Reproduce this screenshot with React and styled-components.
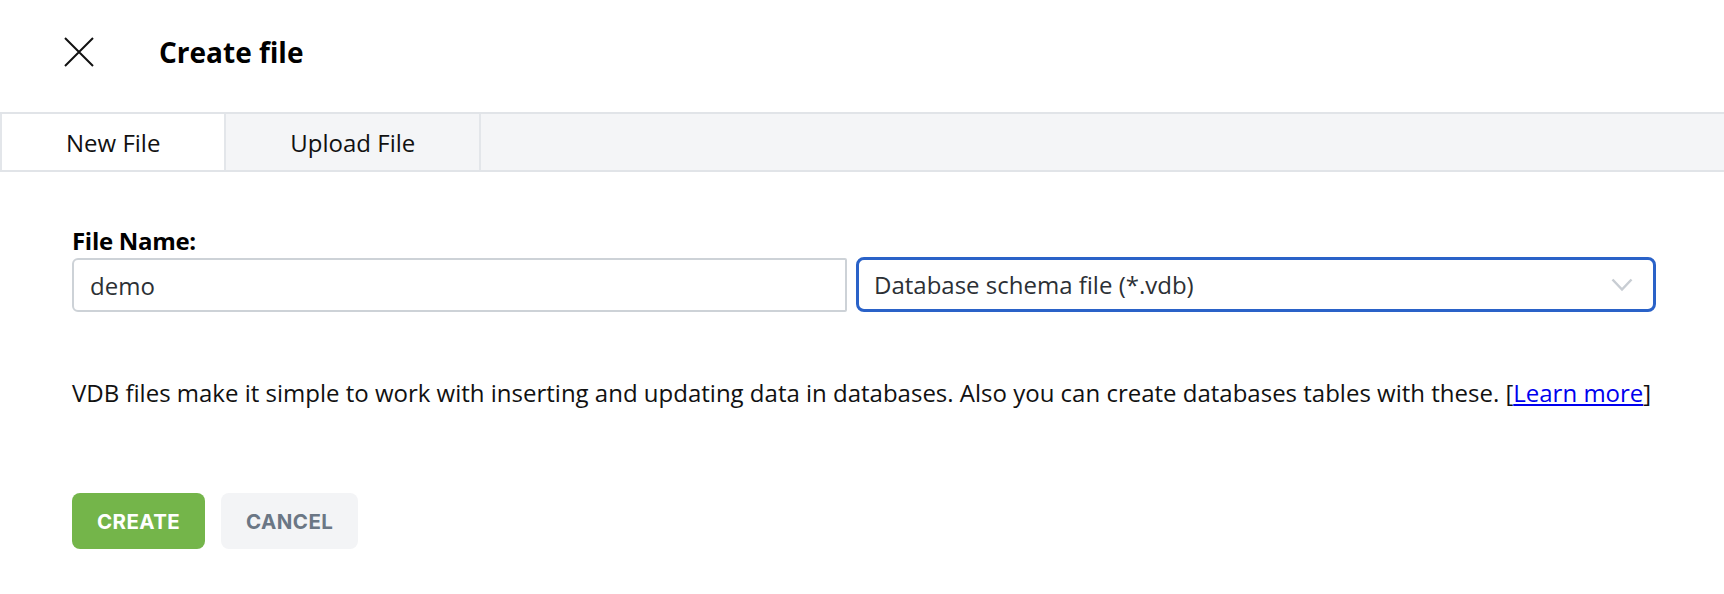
import React from 'react'
import styled, { createGlobalStyle } from 'styled-components'

const GlobalStyle = createGlobalStyle`
  * { box-sizing: border-box; }
  html, body {
    margin: 0;
    padding: 0;
    background: #ffffff;
    font-family: "Open Sans", "Noto Sans", sans-serif;
    color: #000000;
  }
`

const Page = styled.div`
  width: 1724px;
  min-height: 594px;
  background: #fff;
`

const Header = styled.header`
  display: flex;
  align-items: center;
  height: 104px;
  padding-left: 64px;
  margin-bottom: 8px;
`

const CloseButton = styled.button`
  display: flex;
  align-items: center;
  justify-content: center;
  width: 30px;
  height: 30px;
  padding: 0;
  border: none;
  background: none;
  cursor: pointer;
  margin-right: 65px;
`

const Title = styled.h1`
  margin: 0;
  font-size: 28px;
  font-weight: 700;
  color: #000;
`

const TabBar = styled.div`
  display: flex;
  height: 60px;
  background: #f4f5f7;
  border-top: 2px solid #e1e4e8;
  border-bottom: 2px solid #e1e4e8;
`

const Tab = styled.div`
  display: flex;
  align-items: center;
  padding: 0 64px;
  font-size: 24px;
  color: #111;
  background: ${props => (props.active ? '#ffffff' : 'transparent')};
  border-right: 2px solid #e3e6ea;
  &:first-child {
    border-left: 2px solid #e3e6ea;
  }
`

const Body = styled.main`
  padding: 0 72px;
`

const Label = styled.label`
  display: block;
  margin-top: 53px;
  margin-bottom: 1px;
  font-size: 24px;
  line-height: 32px;
  font-weight: 700;
  letter-spacing: -0.3px;
`

const FieldRow = styled.div`
  display: grid;
  grid-template-columns: 775px 800px;
  column-gap: 9px;
  align-items: center;
`

const TextInput = styled.input`
  height: 54px;
  padding: 0 16px;
  border: 2px solid #cdd2d7;
  border-radius: 6px 2px 2px 6px;
  font-family: inherit;
  font-size: 24px;
  color: #2c3035;
  outline: none;
`

const Select = styled.div`
  display: flex;
  align-items: center;
  justify-content: space-between;
  height: 55px;
  padding: 0 20px 0 15px;
  border: 3px solid #2a62c8;
  border-radius: 8px;
  font-size: 24px;
  color: #2c3035;
  margin-top: -1px;
`

const Description = styled.p`
  margin: 65px 0 0;
  font-size: 24px;
  line-height: 32px;
  color: #111;

  a {
    color: #0000ee;
    text-decoration: underline;
  }
`

const Actions = styled.div`
  display: flex;
  gap: 16px;
  margin-top: 84px;
`

const Button = styled.button`
  height: 56px;
  padding: 0 25px;
  border: none;
  border-radius: 8px;
  font-family: "Inter", "Lato", sans-serif;
  font-weight: 700;
  font-size: 20.5px;
  letter-spacing: 0.4px;
  cursor: pointer;
  background: ${props => (props.primary ? '#74b54a' : '#f3f4f6')};
  color: ${props => (props.primary ? '#ffffff' : '#6b7785')};
`

const CloseIcon = () => (
  <svg width="30" height="30" viewBox="0 0 30 30">
    <path d="M1 1 L29 29 M29 1 L1 29" stroke="#111" strokeWidth="2" fill="none" />
  </svg>
)

const Chevron = () => (
  <svg width="22" height="14" viewBox="0 0 22 14">
    <path d="M1.5 1.5 L11 11.5 L20.5 1.5" stroke="#c8cdd3" strokeWidth="2.5" fill="none" />
  </svg>
)

const App = () => {
  return (
    <Page>
      <GlobalStyle />
      <Header>
        <CloseButton aria-label="Close">
          <CloseIcon />
        </CloseButton>
        <Title>Create file</Title>
      </Header>
      <TabBar>
        <Tab active>New File</Tab>
        <Tab>Upload File</Tab>
      </TabBar>
      <Body>
        <Label htmlFor="file-name">File Name:</Label>
        <FieldRow>
          <TextInput id="file-name" defaultValue="demo" />
          <Select>
            <span>Database schema file (*.vdb)</span>
            <Chevron />
          </Select>
        </FieldRow>
        <Description>
          VDB files make it simple to work with inserting and updating data in databases. Also you can create databases tables with these. [<a href="#learn">Learn more</a>]
        </Description>
        <Actions>
          <Button primary>CREATE</Button>
          <Button>CANCEL</Button>
        </Actions>
      </Body>
    </Page>
  )
}

export default App
